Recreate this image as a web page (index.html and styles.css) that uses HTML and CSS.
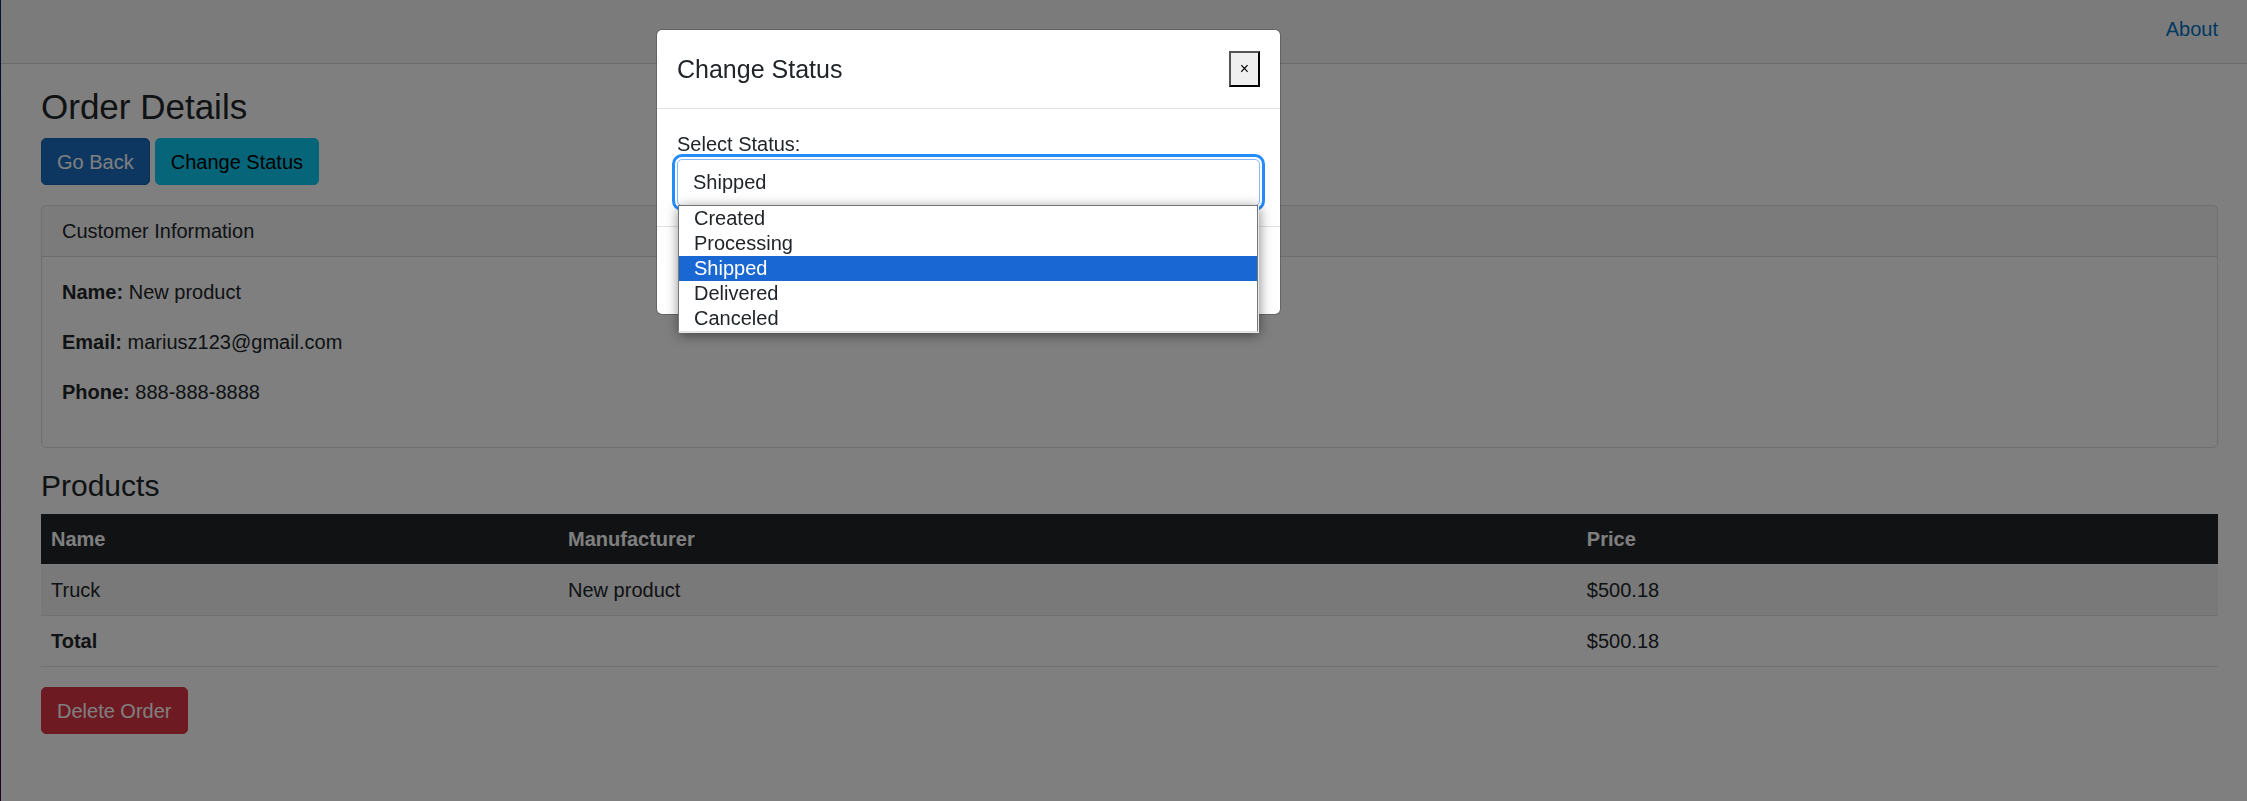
FILE: index.html
```html
<!DOCTYPE html>
<html lang="en">
<head>
<meta charset="utf-8">
<meta name="viewport" content="width=device-width, initial-scale=1">
<title>Order Details</title>
<link rel="stylesheet" href="styles.css">
</head>
<body>
<div class="page">
  <div class="sidebar"></div>
  <div class="main">
    <nav class="top-row"><a href="#about">About</a></nav>
    <main class="content">
      <h2 class="page-title">Order Details</h2>
      <div class="actions">
        <button type="button" class="btn btn-primary">Go Back</button>
        <button type="button" class="btn btn-info">Change Status</button>
      </div>
      <section class="card">
        <div class="card-header">Customer Information</div>
        <div class="card-body">
          <p><strong>Name:</strong> New product</p>
          <p><strong>Email:</strong> mariusz123@gmail.com</p>
          <p><strong>Phone:</strong> 888-888-8888</p>
        </div>
      </section>
      <h3 class="section-title">Products</h3>
      <table class="table">
        <colgroup><col class="col-name"><col class="col-maker"><col></colgroup>
        <thead>
          <tr><th scope="col">Name</th><th scope="col">Manufacturer</th><th scope="col">Price</th></tr>
        </thead>
        <tbody>
          <tr class="striped"><td>Truck</td><td>New product</td><td>$500.18</td></tr>
          <tr><td colspan="2"><strong>Total</strong></td><td>$500.18</td></tr>
        </tbody>
      </table>
      <button type="button" class="btn btn-danger">Delete Order</button>
    </main>
  </div>
</div>

<div class="backdrop">
  <div class="modal" role="dialog" aria-modal="true" aria-labelledby="modal-title">
    <div class="modal-header">
      <h5 class="modal-title" id="modal-title">Change Status</h5>
      <button type="button" class="close" aria-label="Close">×</button>
    </div>
    <div class="modal-body">
      <label for="status">Select Status:</label>
      <div class="select-wrap">
        <select id="status" class="form-control">
          <option>Created</option>
          <option>Processing</option>
          <option selected>Shipped</option>
          <option>Delivered</option>
          <option>Canceled</option>
        </select>
        <ul class="options" role="listbox" aria-label="Status">
          <li role="option">Created</li>
          <li role="option">Processing</li>
          <li role="option" class="active" aria-selected="true">Shipped</li>
          <li role="option">Delivered</li>
          <li role="option">Canceled</li>
        </ul>
      </div>
    </div>
    <div class="modal-footer"></div>
  </div>
</div>
</body>
</html>
```
FILE: styles.css
```css
*, *::before, *::after { box-sizing: border-box; }

body {
  margin: 0;
  background: #fff;
  color: #212529;
  font-family: "Liberation Sans", Arial, sans-serif;
  font-size: 20px;
  line-height: 30px;
}

h2, h3, h5, p, ul { margin: 0; padding: 0; }

.page { display: flex; min-height: 100vh; }

.sidebar {
  flex: 0 0 1px;
  background: linear-gradient(180deg, #052767 0%, #3a0647 70%);
}

.main { flex: 1; min-width: 0; }

.top-row {
  display: flex;
  justify-content: flex-end;
  padding: 14px 29px 19px;
  background: #f7f7f7;
  border-bottom: 1px solid #d6d5d5;
}
.top-row a { color: #0071c1; text-decoration: none; }

.content { padding: 22px 29px 24px 40px; }

.page-title {
  margin-bottom: 10px;
  font-size: 35px;
  font-weight: normal;
  line-height: 42px;
}

.actions { display: flex; gap: 5px; margin-bottom: 20px; }

.btn {
  padding: 8px 15px 7px;
  border: 1px solid transparent;
  border-radius: 5px;
  color: #fff;
  font: inherit;
  line-height: 30px;
}
.btn-primary { background: #1b6ec2; border-color: #1861ac; }
.btn-info { background: #0dcaf0; border-color: #0dcaf0; color: #000; }
.btn-danger { background: #dc3545; border-color: #dc3545; }

.card {
  margin-bottom: 20px;
  border: 1px solid rgba(0, 0, 0, .125);
  border-radius: 5px;
}
.card-header {
  padding: 10px 20px;
  background: rgba(0, 0, 0, .03);
  border-bottom: 1px solid rgba(0, 0, 0, .125);
}
.card-body { padding: 20px; }
.card-body p { margin-bottom: 20px; }

.section-title {
  margin-bottom: 10px;
  font-size: 30px;
  font-weight: normal;
  line-height: 36px;
}

.table {
  width: 100%;
  margin-bottom: 20px;
  border-collapse: separate;
  border-spacing: 0;
  table-layout: fixed;
}
.col-name { width: 23.75%; }
.col-maker { width: 46.8%; }
.table th, .table td {
  padding: 10px;
  border-bottom: 1px solid #dee2e6;
  text-align: left;
}
.table th { border-bottom-color: #f8f8f8; background: #212529; background-clip: padding-box; color: #fff; }
.striped td { background: #f2f2f2; }

.backdrop {
  position: fixed;
  inset: 0;
  padding: 29px 310px 29px 0;
  background: rgba(0, 0, 0, .5);
}

.modal {
  max-width: 625px;
  margin: 0 auto;
  background: #fff;
  background-clip: padding-box;
  border: 1px solid rgba(0, 0, 0, .2);
  border-radius: 6px;
}
.modal-header {
  display: flex;
  justify-content: space-between;
  align-items: center;
  padding: 20px;
  border-bottom: 1px solid #dee2e6;
}
.modal-title { font-size: 25px; font-weight: normal; line-height: 38px; }

.close {
  padding: 0 9px;
  border: 2px outset #000;
  background: #efefef;
  color: #000;
  font-family: inherit;
  font-size: 16px;
  line-height: 32px;
}

.modal-body { padding: 20px; }
.modal-body label { display: block; }

.select-wrap { position: relative; }

.form-control {
  appearance: none;
  display: block;
  width: 100%;
  padding: 8px 15px 9px;
  border: 1px solid #86b7fe;
  border-radius: 5px;
  outline: 3px solid #258cfb;
  outline-offset: 2px;
  background: #fff;
  color: #212529;
  font: inherit;
  line-height: 28px;
}

.options {
  position: absolute;
  top: 46px;
  left: 1px;
  right: 2px;
  border: 1px solid #767676;
  border-bottom-color: #e0e0e0;
  background: #fff;
  box-shadow: 1px 1px 0 #e8e8e8, 1px 3px 12px rgba(0, 0, 0, .5);
  list-style: none;
  line-height: 24px;
}
.options li { padding: 0 15px 1px; }
.options .active { background: #1967d2; color: #fff; }

.modal-footer {
  min-height: 88px;
  border-top: 1px solid #dee2e6;
}
```
